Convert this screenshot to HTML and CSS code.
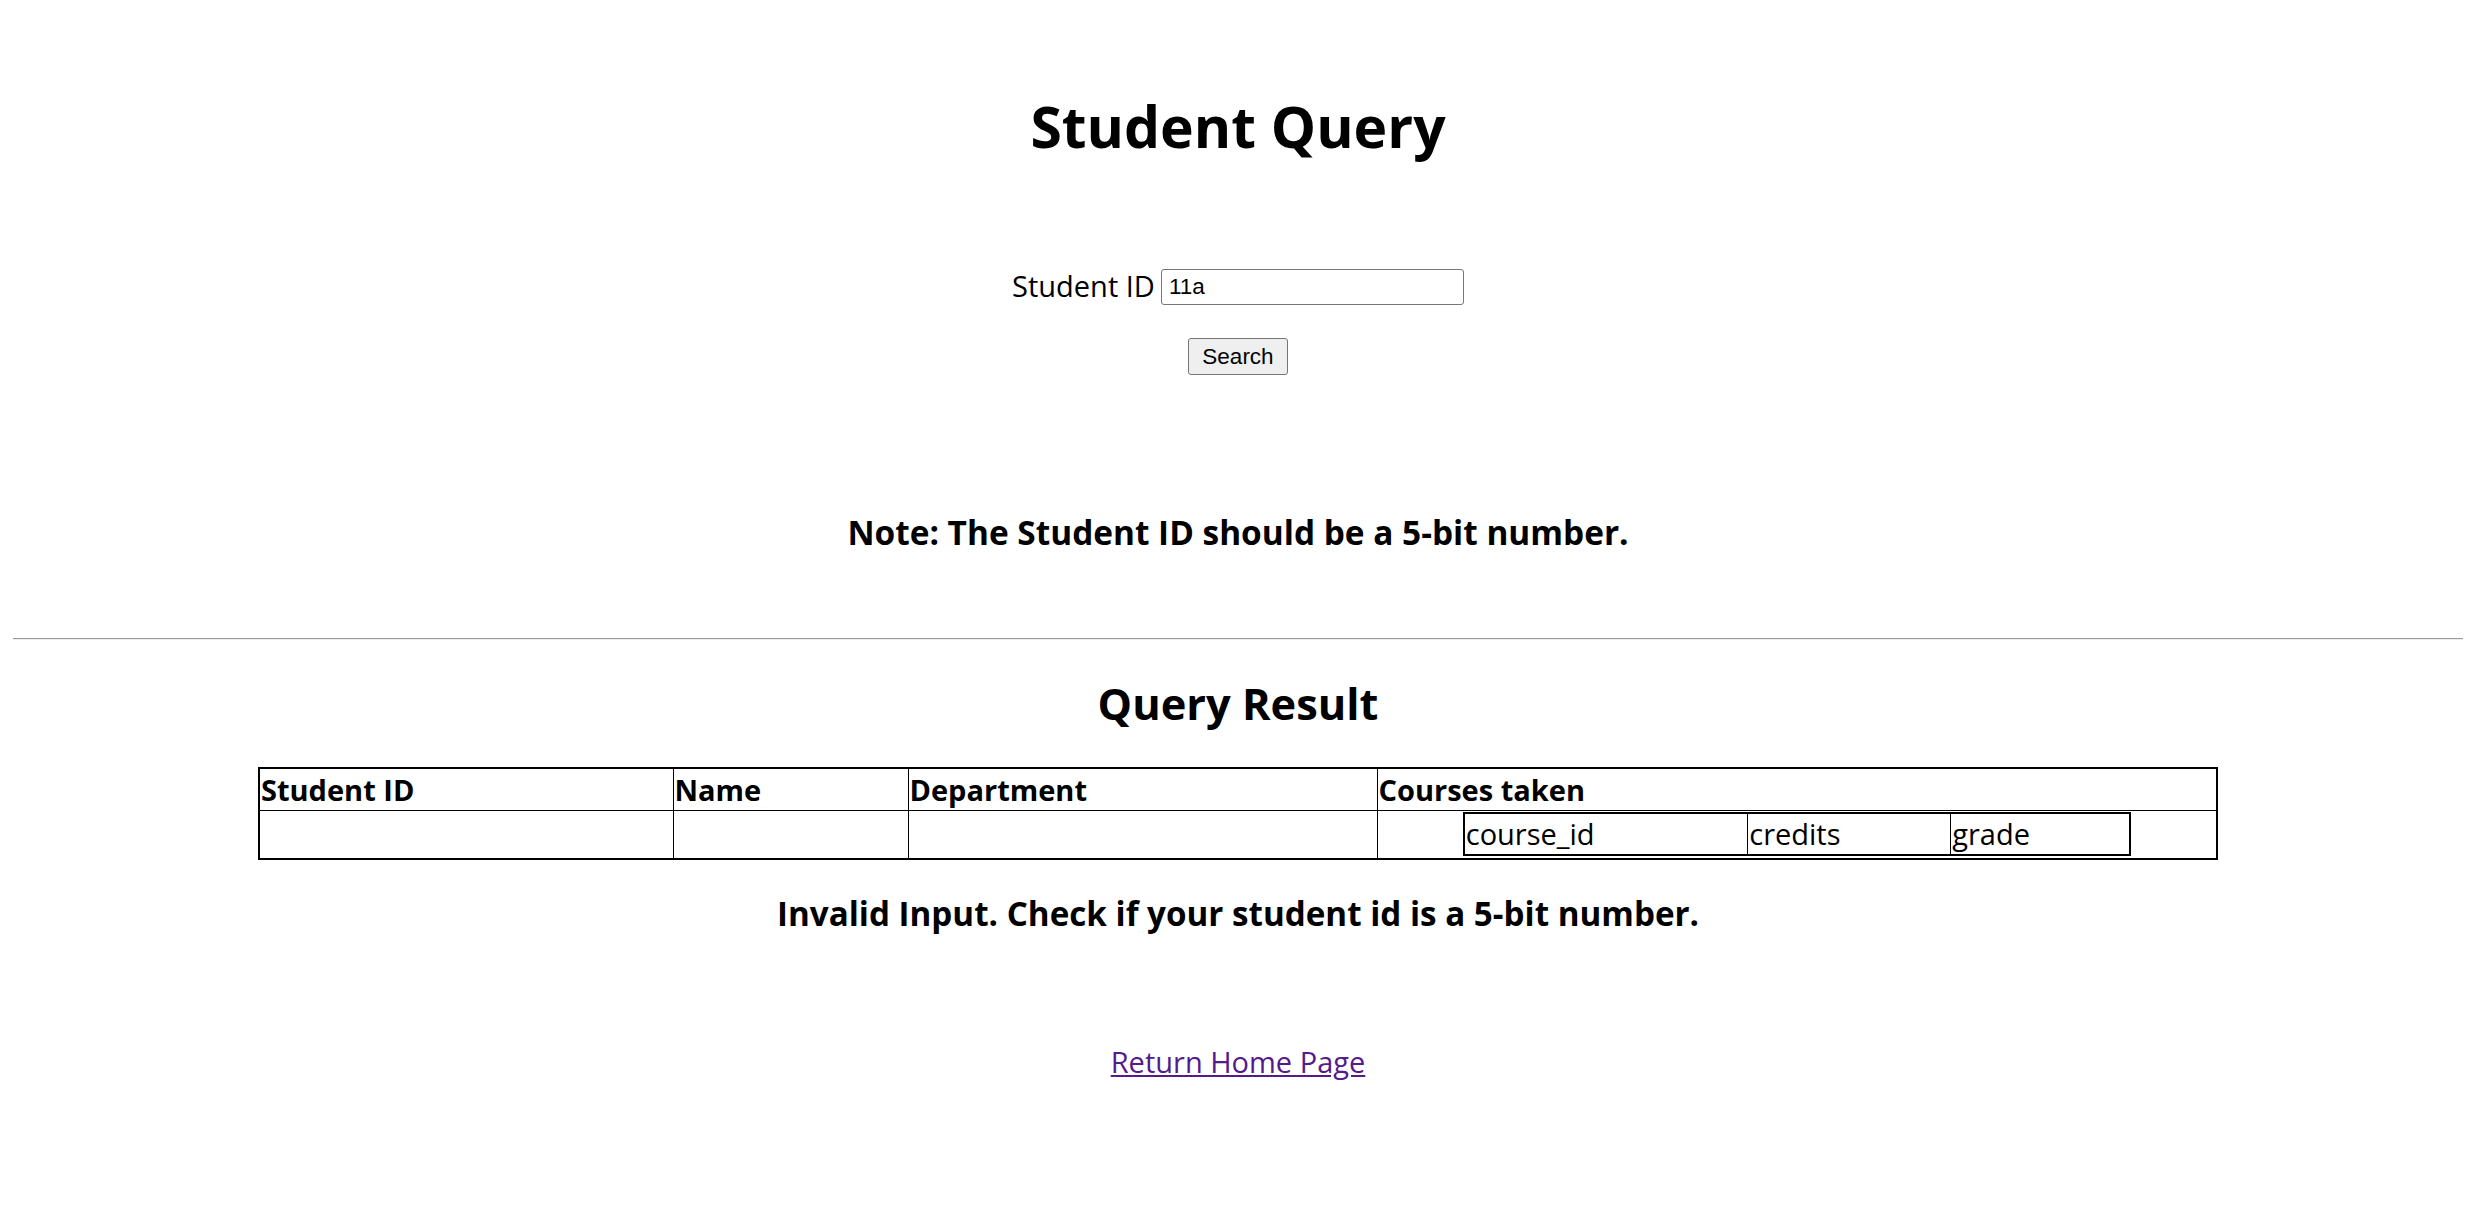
FILE: index.html
```html
<!DOCTYPE html>
<html lang="en">
<head>
<meta charset="utf-8">
<title>Student Query</title>
<link rel="stylesheet" href="styles.css">
</head>
<body>
<h1 class="title">Student Query</h1>
<form class="query-form">
  <div class="field">
    <label class="field-label" for="sid">Student ID</label>
    <input class="field-input" id="sid" type="text" value="11a">
  </div>
  <button class="search-btn" type="button">Search</button>
</form>
<h3 class="note">Note: The Student ID should be a 5-bit number.</h3>
<hr class="divider">
<h2 class="result-title">Query Result</h2>
<table class="result-table">
  <colgroup>
    <col class="c-id"><col class="c-name"><col class="c-dept"><col class="c-courses">
  </colgroup>
  <tr>
    <th>Student ID</th>
    <th>Name</th>
    <th>Department</th>
    <th>Courses taken</th>
  </tr>
  <tr>
    <td></td>
    <td></td>
    <td></td>
    <td class="courses-cell">
      <table class="course-table">
        <colgroup><col class="cc-id"><col class="cc-credits"><col class="cc-grade"></colgroup>
        <tr><td>course_id</td><td>credits</td><td>grade</td></tr>
      </table>
    </td>
  </tr>
</table>
<h3 class="error">Invalid Input. Check if your student id is a 5-bit number.</h3>
<p class="home"><a class="home-link" href="#">Return Home Page</a></p>
</body>
</html>
```
FILE: styles.css
```css
html, body {
  margin: 0;
  padding: 0;
  background: #fff;
  color: #000;
}
body {
  padding: 0 13px;
  font-family: "Open Sans", "Noto Sans", sans-serif;
  font-size: 30px;
}
.title {
  margin: 86px 0 0;
  font-size: 57px;
  line-height: 80px;
  font-weight: 700;
  text-align: center;
}
.query-form {
  margin: 100px 0 0;
  display: flex;
  flex-direction: column;
  align-items: center;
  gap: 32px;
}
.field {
  display: flex;
  align-items: center;
  gap: 6px;
  height: 40px;
}
.field-label {
  font-size: 29px;
  line-height: 40px;
}
.field-input {
  box-sizing: border-box;
  width: 303px;
  height: 36px;
  margin: 2px 0 0;
  padding: 1px 7px;
  border: 1.5px solid #767676;
  border-radius: 3px;
  font-family: "Liberation Sans", Arial, sans-serif;
  font-size: 22.5px;
  color: #000;
}
.search-btn {
  box-sizing: border-box;
  width: 100px;
  height: 37px;
  padding: 0;
  border: 1.5px solid #767676;
  border-radius: 3px;
  background: #efefef;
  font-family: "Liberation Sans", Arial, sans-serif;
  font-size: 22.5px;
  color: #000;
}
.note {
  margin: 134px 0 0;
  font-size: 33.4px;
  line-height: 46px;
  font-weight: 700;
  text-align: center;
}
.divider {
  margin: 83px 0 0;
  border: 0;
  border-top: 1.5px solid #9a9a9a;
  border-bottom: 1px solid #eeeeee;
  height: 0;
}
.result-title {
  margin: 34px 0 0;
  font-size: 43.4px;
  line-height: 60px;
  font-weight: 700;
  text-align: center;
}
.result-table {
  margin: 33px auto 0;
  width: 1958px;
  table-layout: fixed;
  border-collapse: collapse;
  border: 2px solid #000;
}
.c-id { width: 414px; }
.c-name { width: 235px; }
.c-dept { width: 469px; }
.c-courses { width: 840px; }
.result-table th,
.result-table td {
  border: 1.5px solid #000;
  padding: 0 1px;
  text-align: left;
  vertical-align: middle;
  font-size: 29px;
  line-height: 41px;
}
.result-table th {
  font-weight: 700;
}
.result-table .courses-cell {
  padding: 1px 1px 2px;
}
.course-table {
  margin: 0 auto;
  width: 666px;
  table-layout: fixed;
  border-collapse: collapse;
  border: 2px solid #000;
}
.cc-id { width: 284px; }
.cc-credits { width: 203px; }
.cc-grade { width: 179px; }
.course-table td {
  border: 1.5px solid #000;
  padding: 0 1px;
  font-size: 29px;
  line-height: 40px;
  font-weight: 400;
}
.error {
  margin: 31px 0 0;
  font-size: 33.2px;
  line-height: 46px;
  font-weight: 700;
  text-align: center;
}
.home {
  margin: 105px 0 0;
  font-size: 29px;
  line-height: 40px;
  text-align: center;
}
.home-link {
  color: #551a8b;
  text-decoration: underline;
}
```
